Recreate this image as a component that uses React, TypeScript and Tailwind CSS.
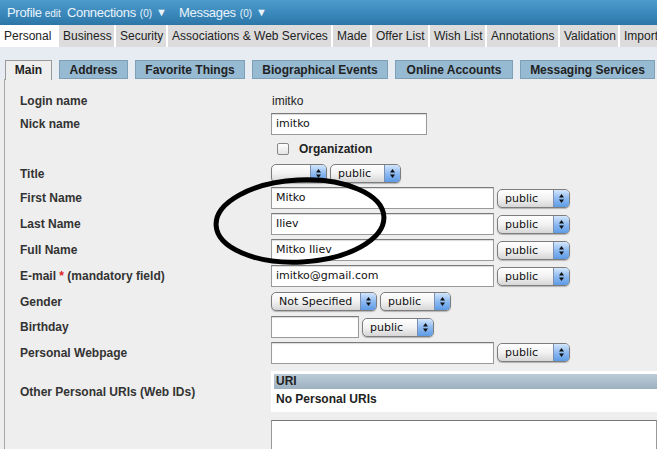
import React from "react";

const sans = { fontFamily: '"Liberation Sans", Helvetica, Arial, sans-serif' };
const ui = { fontFamily: '"DejaVu Sans", "Liberation Sans", sans-serif' };

function Arrows() {
  return (
    <svg width="7" height="11" viewBox="0 0 7 11">
      <path d="M3.5 1 L6 4.5 L1 4.5 Z" fill="#111" />
      <path d="M3.5 10 L6 6.5 L1 6.5 Z" fill="#111" />
    </svg>
  );
}

function Sel({ label, cls }: { label: string; cls: string }) {
  return (
    <div
      className={`flex h-[19px] shrink-0 overflow-hidden rounded-[5px] border border-[#7d7d7d] bg-gradient-to-b from-white via-[#f2f2f2] to-[#d6d6d6] shadow-[0_1px_1px_rgba(0,0,0,0.25)] ${cls}`}
    >
      <span className="flex-1 truncate pl-[7px] text-[11px] leading-[17px] text-[#111]" style={ui}>
        {label}
      </span>
      <span className="flex w-[16px] items-center justify-center border-l border-[#7d8fb0] bg-gradient-to-b from-[#d4e6fb] via-[#8dbaf0] to-[#5d9be6]">
        <Arrows />
      </span>
    </div>
  );
}

function Input({ value, cls }: { value?: string; cls: string }) {
  return (
    <div
      className={`h-[22px] shrink-0 border border-[#9a9a9a] border-t-[#7a7a7a] bg-white pl-[4px] text-[11px] leading-[20px] text-[#111] shadow-[inset_0_1px_1px_rgba(0,0,0,0.15)] ${cls}`}
      style={ui}
    >
      {value}
    </div>
  );
}

function Row({ label, h, children }: { label: React.ReactNode; h: string; children?: React.ReactNode }) {
  return (
    <div className={`flex items-center ${h}`}>
      <div className="w-[251px] shrink-0 text-[12px] font-bold text-[#333]" style={sans}>
        {label}
      </div>
      <div className="flex items-center gap-[3px]">{children}</div>
    </div>
  );
}

export default function App() {
  const topTabs = [
    ["Personal", "w-[57px]", true],
    ["Business", "w-[55px]", false],
    ["Security", "w-[50px]", false],
    ["Associations & Web Services", "w-[163px]", false],
    ["Made", "w-[37px]", false],
    ["Offer List", "w-[56px]", false],
    ["Wish List", "w-[55px]", false],
    ["Annotations", "w-[71px]", false],
    ["Validation", "w-[58px]", false],
    ["Import", "w-[50px]", false],
  ] as const;
  const subTabs = [
    ["Main", "w-[47px]", true],
    ["Address", "w-[69px]", false],
    ["Favorite Things", "w-[110px]", false],
    ["Biographical Events", "w-[136px]", false],
    ["Online Accounts", "w-[118px]", false],
    ["Messaging Services", "w-[135px]", false],
  ] as const;

  return (
    <div className="relative h-[449px] w-[657px] overflow-hidden bg-[#eeeeee]" style={sans}>
      {/* top bar */}
      <div className="flex h-[25px] items-center bg-gradient-to-b from-[#4d9bcb] via-[#3c8abd] to-[#2c76a7] pl-[7px] text-[#eaf3f9]">
        <span className="text-[13px] tracking-[-0.3px]">Profile</span>
        <span className="ml-[3px] mt-[2px] text-[10px]">edit</span>
        <span className="ml-[6px] text-[13px] tracking-[-0.3px]">Connections</span>
        <span className="ml-[4px] mt-[2px] text-[10px]">(0)</span>
        <span className="ml-[4px] text-[11px]">▼</span>
        <span className="ml-[12px] text-[13px] tracking-[-0.3px]">Messages</span>
        <span className="ml-[4px] mt-[2px] text-[10px]">(0)</span>
        <span className="ml-[4px] text-[11px]">▼</span>
      </div>

      {/* top tabs */}
      <div className="flex h-[22px] gap-[2px] bg-white">
        {topTabs.map(([t, w, a]) => (
          <div
            key={t}
            className={`${w} shrink-0 overflow-hidden whitespace-nowrap pl-[4px] text-[12px] leading-[22px] text-[#222] ${a ? "bg-white" : "bg-[#dcdcdc]"}`}
          >
            {t}
          </div>
        ))}
      </div>

      {/* sub tabs */}
      <div className="flex h-[32px] items-end gap-[7px] bg-[#e6ecf2] pl-[5px]">
        {subTabs.map(([t, w, a]) => (
          <div
            key={t}
            className={`${w} shrink-0 whitespace-nowrap text-center text-[12px] font-bold text-[#222] ${
              a
                ? "relative top-[1px] h-[20px] border border-b-0 border-[#999] bg-[#eeeeee] leading-[19px]"
                : "h-[19px] border border-[#7f9fb6] bg-[#97bad3] leading-[18px]"
            }`}
          >
            {t}
          </div>
        ))}
      </div>

      {/* panel */}
      <div className="ml-[4px] h-[400px] border-l border-[#a8a8a8] pl-[15px] pt-[11px]">
        <Row label="Login name" h="h-[22px]">
          <span className="pl-[1px] text-[12px] text-[#222]">imitko</span>
        </Row>
        <Row label="Nick name" h="h-[24px]">
          <Input value="imitko" cls="w-[156px]" />
        </Row>
        <Row label="" h="h-[26px]">
          <div className="ml-[6px] flex items-center">
            <span className="h-[12px] w-[12px] rounded-[2px] border border-[#888] bg-gradient-to-b from-white to-[#e4e4e4]" />
            <span className="ml-[10px] text-[12px] font-bold text-[#222]">Organization</span>
          </div>
        </Row>
        <Row label="Title" h="h-[23px]">
          <Sel label="" cls="w-[56px]" />
          <Sel label="public" cls="w-[71px]" />
        </Row>
        <Row label="First Name" h="h-[26px]">
          <Input value="Mitko" cls="w-[223px]" />
          <Sel label="public" cls="w-[73px]" />
        </Row>
        <Row label="Last Name" h="h-[26px]">
          <Input value="Iliev" cls="w-[223px]" />
          <Sel label="public" cls="w-[73px]" />
        </Row>
        <Row label="Full Name" h="h-[26px]">
          <Input value="Mitko Iliev" cls="w-[223px]" />
          <Sel label="public" cls="w-[73px]" />
        </Row>
        <Row
          label={
            <>
              E-mail <span className="text-[#e02020]">*</span> (mandatory field)
            </>
          }
          h="h-[26px]"
        >
          <Input value="imitko@gmail.com" cls="w-[223px]" />
          <Sel label="public" cls="w-[73px]" />
        </Row>
        <Row label="Gender" h="h-[25px]">
          <Sel label="Not Specified" cls="w-[106px]" />
          <Sel label="public" cls="w-[71px]" />
        </Row>
        <Row label="Birthday" h="h-[26px]">
          <Input cls="w-[88px]" />
          <Sel label="public" cls="w-[72px]" />
        </Row>
        <Row label="Personal Webpage" h="h-[25px]">
          <Input cls="w-[223px]" />
          <Sel label="public" cls="w-[73px]" />
        </Row>
        <div className="flex h-[53px] items-center">
          <div className="w-[251px] shrink-0 text-[12px] font-bold text-[#333]">Other Personal URIs (Web IDs)</div>
          <div className="-mr-[20px] flex-1 bg-white pb-[2px] pl-[3px] pt-[3px] text-[12px] font-bold text-[#222]">
            <div className="h-[15px] bg-gradient-to-b from-[#bccbd7] to-[#9db1c1] pl-[2px] leading-[15px]">URI</div>
            <div className="h-[21px] pl-[2px] leading-[21px]">No Personal URIs</div>
          </div>
        </div>
        <div className="ml-[251px] mt-[2px] h-[60px] border border-[#999] border-t-[#777] bg-white" />
      </div>

      {/* hand-drawn ellipse */}
      <svg className="pointer-events-none absolute left-0 top-0" width="657" height="449">
        <ellipse
          cx="300"
          cy="221"
          rx="84"
          ry="41"
          transform="rotate(-3 300 221)"
          fill="none"
          stroke="#000"
          strokeWidth="5"
        />
      </svg>
    </div>
  );
}
